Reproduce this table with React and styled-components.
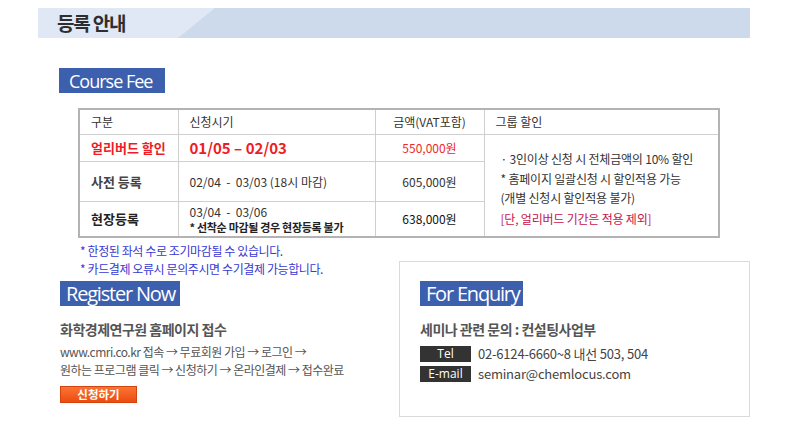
import React from "react";
import styled, { createGlobalStyle } from "styled-components";

const Global = createGlobalStyle`
  html, body { margin: 0; padding: 0; background: #fff; }
  body { font-family: "Noto Sans CJK KR", "Noto Sans", sans-serif; color: #333; }
`;

const Page = styled.div`
  width: 790px;
  height: 421px;
  overflow: hidden;
  padding-top: 8px;
  box-sizing: border-box;
`;

const TitleBar = styled.div`
  position: relative;
  margin-left: 38px;
  width: 712px;
  height: 30px;
  background: #ccdaec;
  display: flex;
  align-items: center;
  padding-left: 19px;
  box-sizing: border-box;
  &::before {
    content: "";
    position: absolute;
    inset: 0;
    background: #dfe8f4;
    clip-path: polygon(0 0, 177px 0, 140px 100%, 0 100%);
  }
`;

const Title = styled.h1`
  position: relative;
  margin: 0;
  font-size: 19px;
  font-weight: 700;
  letter-spacing: -1.2px;
  color: #2e2e2e;
  line-height: 30px;
`;

const Badge = styled.div`
  display: inline-flex;
  align-items: center;
  height: 25px;
  width: ${(p) => p.$w}px;
  padding-left: ${(p) => p.$pl || 9}px;
  box-sizing: border-box;
  background: #3c5fae;
  color: #fff;
  font-family: "Open Sans", "Noto Sans", sans-serif;
  font-size: ${(p) => p.$fs || 18}px;
  letter-spacing: ${(p) => p.$ls || -1}px;
  white-space: nowrap;
`;

const FeeSection = styled.section`
  margin: 30px 0 0 59px;
`;

const Table = styled.table`
  margin: 15px 0 0 19px;
  border-collapse: collapse;
  width: 640px;
  table-layout: fixed;
  border: 2px solid #b3b3b3;
  font-size: 12px;
  color: #333;
`;

const Th = styled.th`
  height: 24px;
  padding: 0 0 0 ${(p) => (p.$center ? 0 : 11)}px;
  text-align: ${(p) => (p.$center ? "center" : "left")};
  font-weight: 400;
  border: 1px solid #cfcfcf;
  line-height: 16px;
`;

const Td = styled.td`
  height: ${(p) => p.$h}px;
  padding: 0 0 0 ${(p) => (p.$center ? 0 : 11)}px;
  text-align: ${(p) => (p.$center ? "center" : "left")};
  border: 1px solid #cfcfcf;
  line-height: 16px;
  vertical-align: middle;
  color: ${(p) => p.$color || "#333"};
  font-weight: ${(p) => (p.$bold ? 700 : 400)};
  font-size: ${(p) => p.$fs || 12}px;
  letter-spacing: ${(p) => p.$ls || 0}px;
  white-space: pre;
`;

const SmallNote = styled.div`
  font-size: 11px;
  font-weight: 700;
  color: #222;
  line-height: 14px;
  letter-spacing: -0.3px;
`;

const GroupCell = styled.td`
  border: 1px solid #cfcfcf;
  padding: 6px 0 0 16px;
  vertical-align: middle;
  font-size: 12px;
  line-height: 19.5px;
  color: #333;
  letter-spacing: -0.2px;
`;

const GroupLine = styled.div`
  color: ${(p) => p.$color || "#333"};
  margin-top: ${(p) => p.$mt || 0}px;
`;

const Bottom = styled.div`
  display: flex;
  margin-top: 4px;
`;

const LeftCol = styled.div`
  width: 399px;
  padding-left: 60px;
  box-sizing: border-box;
`;

const Notes = styled.ul`
  list-style: none;
  margin: 0 0 3px 20px;
  padding: 0;
  color: #3838d4;
  font-size: 12px;
  line-height: 18px;
  letter-spacing: -0.4px;
  white-space: nowrap;
`;

const Heading = styled.div`
  margin-top: ${(p) => p.$mt}px;
  font-size: 14px;
  font-weight: 700;
  color: #555;
  letter-spacing: -0.5px;
  line-height: 20px;
`;

const Steps = styled.p`
  margin: 4px 0 0;
  font-size: 12px;
  color: #555;
  line-height: 18px;
  letter-spacing: -0.5px;
  white-space: nowrap;
`;

const ApplyButton = styled.button`
  margin-top: 7px;
  width: 77px;
  height: 17px;
  padding: 0;
  border: 1px solid #d2450f;
  background: linear-gradient(#fb7434, #ec4c10);
  color: #fff;
  font-family: "Noto Sans CJK KR", sans-serif;
  font-size: 11.5px;
  font-weight: 700;
  line-height: 15px;
  display: block;
  cursor: pointer;
`;

const EnquiryBox = styled.div`
  margin-top: 19px;
  width: 351px;
  height: 156px;
  box-sizing: border-box;
  border: 1px solid #dadada;
  padding: 19px 0 0 20px;
`;

const ContactRow = styled.div`
  display: flex;
  align-items: center;
  gap: 7px;
  margin-top: ${(p) => p.$mt}px;
`;

const ContactLabel = styled.span`
  width: 51px;
  height: 16px;
  background: #333;
  color: #fff;
  font-family: "Open Sans", "Noto Sans", sans-serif;
  font-size: 12px;
  line-height: 16px;
  text-align: center;
`;

const ContactValue = styled.span`
  font-size: 13px;
  color: #444;
  line-height: 16px;
  letter-spacing: -0.2px;
`;

export default function App() {
  return (
    <Page>
      <Global />
      <TitleBar>
        <Title>등록 안내</Title>
      </TitleBar>

      <FeeSection>
        <Badge $w={106} $pl={10}>Course Fee</Badge>
        <Table>
          <colgroup>
            <col style={{ width: 99 }} />
            <col style={{ width: 197 }} />
            <col style={{ width: 109 }} />
            <col style={{ width: 235 }} />
          </colgroup>
          <thead>
            <tr>
              <Th>구분</Th>
              <Th>신청시기</Th>
              <Th $center>금액(VAT포함)</Th>
              <Th>그룹 할인</Th>
            </tr>
          </thead>
          <tbody>
            <tr>
              <Td $h={26} $bold $color="#ee1c24" $fs={13}>얼리버드 할인</Td>
              <Td $h={26} $bold $color="#ee1c24" $fs={15}>01/05 – 02/03</Td>
              <Td $h={26} $center $color="#ee2a2a">550,000원</Td>
              <GroupCell rowSpan={3}>
                <GroupLine>· 3인이상 신청 시 전체금액의 10% 할인</GroupLine>
                <GroupLine>* 홈페이지 일괄신청 시 할인적용 가능</GroupLine>
                <GroupLine>(개별 신청시 할인적용 불가)</GroupLine>
                <GroupLine $color="#c8124c" $mt={1}>[단, 얼리버드 기간은 적용 제외]</GroupLine>
              </GroupCell>
            </tr>
            <tr>
              <Td $h={39} $bold $fs={13} $color="#444">사전 등록</Td>
              <Td $h={39}>{"02/04  -  03/03 (18시 마감)"}</Td>
              <Td $h={39} $center>605,000원</Td>
            </tr>
            <tr>
              <Td $h={34} $bold $fs={13} $color="#222">현장등록</Td>
              <Td $h={34}>
                {"03/04  -  03/06"}
                <SmallNote>* 선착순 마감될 경우 현장등록 불가</SmallNote>
              </Td>
              <Td $h={34} $center $color="#111">638,000원</Td>
            </tr>
          </tbody>
        </Table>
      </FeeSection>

      <Bottom>
        <LeftCol>
          <Notes>
            <li>* 한정된 좌석 수로 조기마감될 수 있습니다.</li>
            <li>* 카드결제 오류시 문의주시면 수기결제 가능합니다.</li>
          </Notes>
          <Badge $w={120} $fs={20} $pl={6} $ls={-1.2}>Register Now</Badge>
          <Heading $mt={13}>화학경제연구원 홈페이지 접수</Heading>
          <Steps>
            www.cmri.co.kr 접속 → 무료회원 가입 → 로그인 →
            <br />
            원하는 프로그램 클릭 → 신청하기 → 온라인결제 → 접수완료
          </Steps>
          <ApplyButton>신청하기</ApplyButton>
        </LeftCol>

        <EnquiryBox>
          <Badge $w={103} $fs={20} $pl={6} $ls={-1.2}>For Enquiry</Badge>
          <Heading $mt={13}>세미나 관련 문의 : 컨설팅사업부</Heading>
          <ContactRow $mt={7}>
            <ContactLabel>Tel</ContactLabel>
            <ContactValue>02-6124-6660~8 내선 503, 504</ContactValue>
          </ContactRow>
          <ContactRow $mt={4}>
            <ContactLabel>E-mail</ContactLabel>
            <ContactValue>seminar@chemlocus.com</ContactValue>
          </ContactRow>
        </EnquiryBox>
      </Bottom>
    </Page>
  );
}
